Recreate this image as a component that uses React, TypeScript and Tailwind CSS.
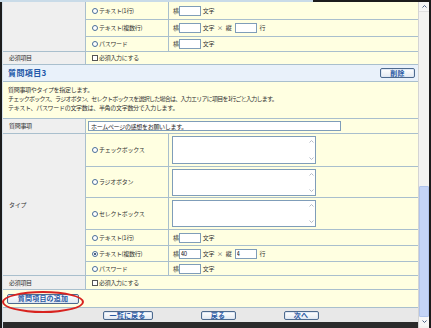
import React from 'react';

const Radio: React.FC<{ checked?: boolean }> = ({ checked }) => (
  <span className="flex h-[6px] w-[6px] shrink-0 items-center justify-center rounded-full border border-[#4a6e98] bg-white">
    {checked && <span className="h-[2px] w-[2px] rounded-full bg-[#0f2d55]" />}
  </span>
);

const Check: React.FC = () => (
  <span className="block h-[6px] w-[6px] shrink-0 border border-[#555] bg-white" />
);

const SmallInput: React.FC<{ value?: string }> = ({ value = '' }) => (
  <input
    readOnly
    value={value}
    className="h-[10px] w-[22px] border border-[#7f9db9] bg-white px-[1px] text-[6px] leading-none text-[#111] outline-none"
  />
);

const Chevron: React.FC<{ down?: boolean; color: string }> = ({ down, color }) => (
  <svg width="5" height="3" viewBox="0 0 5 3">
    <path d={down ? 'M0.5 0.5 L2.5 2.5 L4.5 0.5' : 'M0.5 2.5 L2.5 0.5 L4.5 2.5'} fill="none" stroke={color} strokeWidth="1" />
  </svg>
);

// textarea drawn as a box so its scrollbar stays small
const AreaBox: React.FC<{ h: string }> = ({ h }) => (
  <div className={`ml-[3px] flex w-[144px] justify-end border border-[#7f9db9] bg-white ${h}`}>
    <div className="flex w-[7px] flex-col items-center justify-between py-[3px]">
      <Chevron color="#b4bcc6" />
      <Chevron down color="#b4bcc6" />
    </div>
  </div>
);

const Btn: React.FC<{ label: string; w: string; h?: string }> = ({ label, w, h = 'h-[10px]' }) => (
  <button
    type="button"
    className={`flex items-center justify-center rounded-[2px] border border-[#4d6a8e] bg-gradient-to-b from-white to-[#e3e9f1] text-[7px] leading-none font-bold tracking-[0.2px] text-[#2a5aa4] shadow-[inset_0_0_0_1px_#dfe8f4] ${w} ${h}`}
  >
    {label}
  </button>
);

const Label: React.FC<{ children?: React.ReactNode }> = ({ children }) => (
  <div className="flex w-[83px] shrink-0 items-center border-r border-b border-[#a9bfcd] bg-[#efefef] pl-[6px]">
    {children}
  </div>
);

// one radio option line inside a "タイプ" block
const Option: React.FC<{ h: string; label: string; checked?: boolean; children?: React.ReactNode }> = ({
  h,
  label,
  checked,
  children,
}) => (
  <div className={`flex border-b border-[#a9bfcd] ${h}`}>
    <div className="flex w-[83px] shrink-0 items-center gap-[1px] border-r border-[#a9bfcd] pl-[6px]">
      <Radio checked={checked} />
      <span>{label}</span>
    </div>
    <div className="flex flex-1 items-center">{children}</div>
  </div>
);

const Width: React.FC<{ w?: string }> = ({ w }) => (
  <div className="flex items-center pl-[4px]">
    <span>横</span>
    <SmallInput value={w} />
    <span className="ml-[2px]">文字</span>
  </div>
);

const WidthRows: React.FC<{ w?: string; r?: string }> = ({ w, r }) => (
  <div className="flex items-center pl-[4px]">
    <span>横</span>
    <SmallInput value={w} />
    <span className="ml-[2px]">文字</span>
    <span className="ml-[3px] text-[#555]">×</span>
    <span className="ml-[3px]">縦</span>
    <span className="ml-[3px] flex">
      <SmallInput value={r} />
    </span>
    <span className="ml-[3px]">行</span>
  </div>
);

const Required: React.FC<{ h: string }> = ({ h }) => (
  <div className={`flex ${h}`}>
    <Label>必須項目</Label>
    <div className="flex flex-1 items-center gap-[1px] border-b border-[#a9bfcd] pl-[6px]">
      <Check />
      <span>必須入力にする</span>
    </div>
  </div>
);

const Scrollbar: React.FC = () => (
  <div className="flex w-[10px] flex-col bg-[#f3f3f1]">
    <div className="flex h-[10px] items-center justify-center border-b border-[#e0e0e0] bg-[#f7f7f7]">
      <Chevron color="#4d6185" />
    </div>
    <div className="h-[174px]" />
    <div className="h-[131px] rounded-[1px] border border-[#b0c4ec] bg-[#c4d4f6]" />
    <div className="flex h-[9px] items-center justify-center bg-[#f7f7f7]">
      <Chevron down color="#4d6185" />
    </div>
  </div>
);

export default function App() {
  return (
    <div className="flex h-[328px] w-[431px] flex-col overflow-hidden bg-white font-['Noto_Sans_CJK_JP','Noto_Sans',sans-serif] text-[6px] leading-none tracking-[-0.3px] text-[#333]">
      <div className="flex h-[2px] shrink-0">
        <div className="w-[313px] bg-[#c9dbe8]" />
        <div className="flex-1 bg-[#1c1c1c]" />
      </div>
      <div className="flex min-h-0 flex-1">
        <div className="w-[2px] bg-[#1c1c1c]" />
        <div className="flex w-[416px] flex-col border-l border-[#d6e1ea] bg-[#ffffe1]">
          {/* tail of question 2 */}
          <div className="flex">
            <Label />
            <div className="flex flex-1 flex-col">
              <Option h="h-[18px]" label="テキスト(1行)">
                <Width />
              </Option>
              <Option h="h-[17px]" label="テキスト(複数行)">
                <WidthRows />
              </Option>
              <Option h="h-[15px]" label="パスワード">
                <Width />
              </Option>
            </div>
          </div>
          <Required h="h-[13px]" />

          {/* question 3 */}
          <div className="flex h-[17px] items-center justify-between border-b border-[#a9bfcd] bg-[#e9f1fa] pr-[3px] pl-[5px]">
            <span className="text-[8px] font-bold tracking-[0.4px] text-[#2258a8]">質問項目3</span>
            <Btn label="削除" w="w-[35px]" />
          </div>
          <div className="flex h-[37px] flex-col gap-[3px] border-b border-[#a9bfcd] pt-[5px] pl-[5px]">
            <p>質問事項やタイプを指定します。</p>
            <p className="tracking-[-0.75px]">
              チェックボックス、ラジオボタン、セレクトボックスを選択した場合は、入力エリアに項目を1行ごと入力します。
            </p>
            <p>テキスト、パスワードの文字数は、半角の文字数分で入力します。</p>
          </div>
          <div className="flex h-[15px]">
            <Label>質問事項</Label>
            <div className="flex flex-1 items-center border-b border-[#a9bfcd] pl-[2px]">
              <input
                readOnly
                value="ホームページの感想をお願いします。"
                className="h-[10px] w-[253px] border border-[#7f9db9] bg-white px-[2px] text-[6px] leading-none text-[#222] outline-none"
              />
            </div>
          </div>
          <div className="flex">
            <Label>タイプ</Label>
            <div className="flex flex-1 flex-col">
              <Option h="h-[33px]" label="チェックボックス">
                <AreaBox h="h-[28px]" />
              </Option>
              <Option h="h-[31px]" label="ラジオボタン">
                <AreaBox h="h-[27px]" />
              </Option>
              <Option h="h-[32px]" label="セレクトボックス">
                <AreaBox h="h-[27px]" />
              </Option>
              <Option h="h-[16px]" label="テキスト(1行)">
                <Width />
              </Option>
              <Option h="h-[16px]" label="テキスト(複数行)" checked>
                <WidthRows w="40" r="4" />
              </Option>
              <Option h="h-[14px]" label="パスワード">
                <Width />
              </Option>
            </div>
          </div>
          <Required h="h-[14px]" />
          <div className="relative flex h-[18px] items-center border-b border-[#a9bfcd] pl-[4px]">
            <Btn label="質問項目の追加" w="w-[72px]" />
            <div className="absolute top-[1px] left-[-1px] z-10 h-[22px] w-[82px] rounded-[50%] border-2 border-[#d8231f]" />
          </div>
          <div className="flex h-[14px] items-center justify-center gap-[48px] bg-[#e8e8e8]">
            <Btn label="一覧に戻る" w="w-[50px]" h="h-[9px]" />
            <Btn label="戻る" w="w-[35px]" h="h-[9px]" />
            <Btn label="次へ" w="w-[35px]" h="h-[9px]" />
          </div>
          <div className="h-[6px] bg-[#2b2b2b]" />
        </div>
        <div className="w-[1px] bg-[#d4d4d4]" />
        <Scrollbar />
        <div className="w-[2px] bg-[#1c1c1c]" />
      </div>
    </div>
  );
}
